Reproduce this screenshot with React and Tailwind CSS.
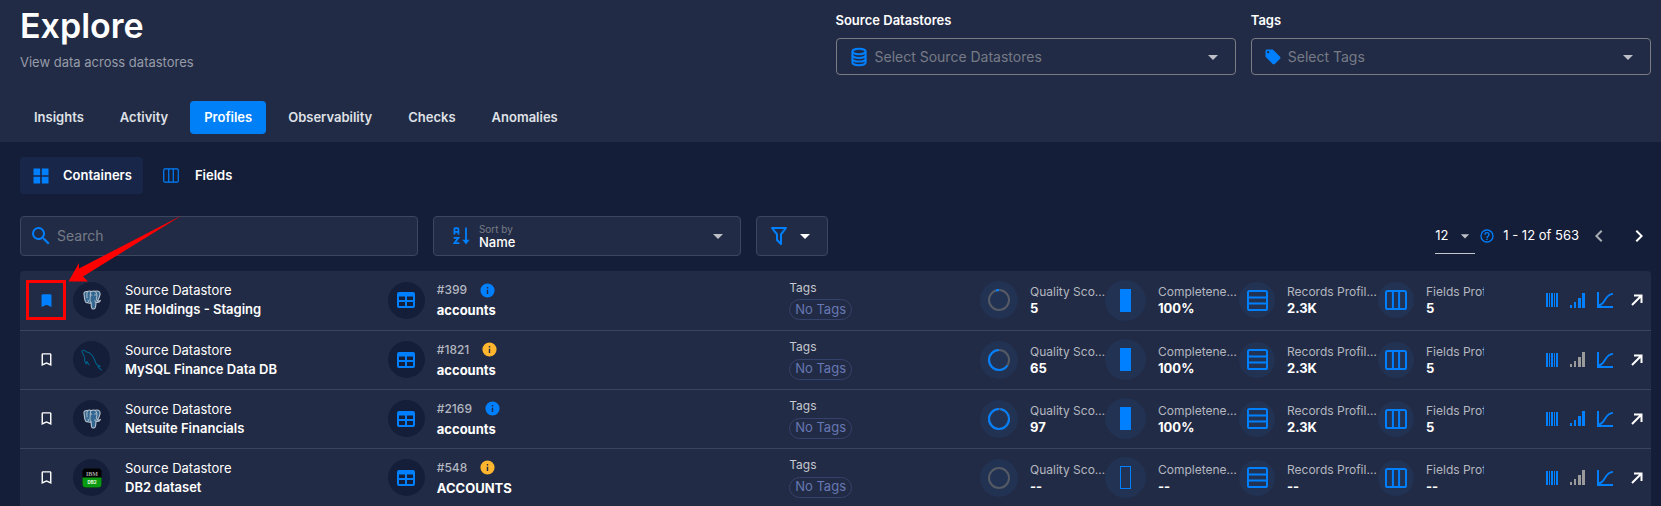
import React from "react";

function Mdi({ d, className = "size-5" }) {
  return (
    <svg viewBox="0 0 24 24" fill="currentColor" aria-hidden="true" className={"shrink-0 " + className}>
      <path d={d} />
    </svg>
  );
}

const P = {
  tag: "M5.5,7A1.5,1.5 0 0,1 4,5.5A1.5,1.5 0 0,1 5.5,4A1.5,1.5 0 0,1 7,5.5A1.5,1.5 0 0,1 5.5,7M21.41,11.58L12.41,2.58C12.05,2.22 11.55,2 11,2H4C2.89,2 2,2.89 2,4V11C2,11.55 2.22,12.05 2.59,12.41L11.58,21.41C11.95,21.77 12.45,22 13,22C13.55,22 14.05,21.77 14.41,21.41L21.41,14.41C21.78,14.05 22,13.55 22,13C22,12.44 21.77,11.94 21.41,11.58Z",
  caret: "M7,10L12,15L17,10H7Z",
  grid: "M3,11H11V3H3M3,21H11V13H3M13,21H21V13H13M13,3V11H21V3",
  search:
    "M9.5,3A6.5,6.5 0 0,1 16,9.5C16,11.11 15.41,12.59 14.44,13.73L14.71,14H15.5L20.5,19L19,20.5L14,15.5V14.71L13.73,14.44C12.59,15.41 11.11,16 9.5,16A6.5,6.5 0 0,1 3,9.5A6.5,6.5 0 0,1 9.5,3M9.5,5C7,5 5,7 5,9.5C5,12 7,14 9.5,14C12,14 14,12 14,9.5C14,7 12,5 9.5,5Z",
  filter:
    "M15,19.88C15.04,20.18 14.94,20.5 14.71,20.71C14.32,21.1 13.69,21.1 13.3,20.71L9.29,16.7C9.06,16.47 8.96,16.16 9,15.87V10.75L4.21,4.62C3.87,4.19 3.95,3.56 4.38,3.22C4.57,3.08 4.78,3 5,3V3H19V3C19.22,3 19.43,3.08 19.62,3.22C20.05,3.56 20.13,4.19 19.79,4.62L15,10.75V19.88M7.04,5L11,10.06V15.58L13,17.58V10.05L16.96,5H7.04Z",
  help: "M11,18H13V16H11V18M12,2A10,10 0 0,0 2,12A10,10 0 0,0 12,22A10,10 0 0,0 22,12A10,10 0 0,0 12,2M12,20C7.59,20 4,16.41 4,12C4,7.59 7.59,4 12,4C16.41,4 20,7.59 20,12C20,16.41 16.41,20 12,20M12,6A4,4 0 0,0 8,10H10A2,2 0 0,1 12,8A2,2 0 0,1 14,10C14,12 11,11.75 11,15H13C13,12.75 16,12.5 16,10A4,4 0 0,0 12,6Z",
  left: "M15.41,16.58L10.83,12L15.41,7.41L14,6L8,12L14,18L15.41,16.58Z",
  right: "M8.59,16.58L13.17,12L8.59,7.41L10,6L16,12L10,18L8.59,16.58Z",
  bookmark: "M17,3H7A2,2 0 0,0 5,5V21L12,18L19,21V5C19,3.89 18.1,3 17,3Z",
  bookmarkOutline: "M17,18L12,15.82L7,18V5H17M17,3H7A2,2 0 0,0 5,5V21L12,18L19,21V5C19,3.89 18.1,3 17,3Z",
  info: "M13,9H11V7H13M13,17H11V11H13M12,2A10,10 0 0,0 2,12A10,10 0 0,0 12,22A10,10 0 0,0 22,12A10,10 0 0,0 12,2Z",
};

function DatabaseIcon() {
  return (
    <svg viewBox="0 0 20 20" fill="none" stroke="currentColor" strokeWidth="2" aria-hidden="true" className="size-5 shrink-0">
      <ellipse cx="10" cy="4.5" rx="6.6" ry="2.7" />
      <path d="M3.4 4.5v11c0 1.5 3 2.7 6.6 2.7s6.6-1.2 6.6-2.7v-11" />
      <path d="M3.4 8.2c0 1.5 3 2.7 6.6 2.7s6.6-1.2 6.6-2.7M3.4 11.9c0 1.5 3 2.7 6.6 2.7s6.6-1.2 6.6-2.7" />
    </svg>
  );
}

function ColumnsIcon({ className = "h-5 w-[22px]", weight = 2 }) {
  return (
    <svg viewBox="0 0 22 20" fill="none" stroke="currentColor" strokeWidth={weight} aria-hidden="true" className={"shrink-0 " + className}>
      <rect x="1" y="1" width="20" height="18" rx="1.6" />
      <path d="M7.9 1v18M14.1 1v18" />
    </svg>
  );
}

function RowsIcon() {
  return (
    <svg viewBox="0 0 21 21" fill="none" stroke="currentColor" strokeWidth="2" aria-hidden="true" className="size-[21px] shrink-0">
      <rect x="1" y="1" width="19" height="19" rx="1.6" />
      <path d="M1 7.5h19M1 13.5h19" />
    </svg>
  );
}

function TableIcon() {
  return (
    <svg viewBox="0 0 18 16" aria-hidden="true" className="h-4 w-[18px]">
      <path
        fill="currentColor"
        fillRule="evenodd"
        d="M2 0h14a2 2 0 0 1 2 2v12a2 2 0 0 1-2 2H2a2 2 0 0 1-2-2V2a2 2 0 0 1 2-2ZM2 4.5v3.5h6V4.5ZM10 4.5v3.5h6V4.5ZM2 10v4h6v-4ZM10 10v4h6v-4Z"
      />
    </svg>
  );
}

function SortIcon() {
  return (
    <svg viewBox="0 0 18 18" fill="none" stroke="currentColor" strokeWidth="1.8" aria-hidden="true" className="size-[18px] shrink-0">
      <path d="M1.4 7.5V2.2a1 1 0 0 1 1-1h2a1 1 0 0 1 1 1v5.3M1.4 4.8h4M.6 10.9h4.8L1.4 16.2h5" />
      <path d="M13 .5v13" />
      <path d="M9.4 12.8h7.2L13 17.4Z" fill="currentColor" stroke="none" />
    </svg>
  );
}

function PostgresLogo() {
  return (
    <svg viewBox="0 0 20 20" aria-hidden="true" className="size-5">
      <path
        d="M2.2 5.2C1.3 2.6 3 1.1 5.4 1.5c1.2-.6 2.6-.5 3.8-.1 1.2-.5 2.8-.6 4-.1 3.3-.9 5.4.7 4.8 3.6-.4 2.1-1.4 4.2-2.6 6 1.2.1 2 .2 2.8-.1-.6 1.6-3 2-4.2 1.5-.2 2.2 0 4-.8 5.6-.8 1.4-3 1.5-3.6-.2-.5-1.7-.2-3.5-.6-5-1.2.7-2.6.5-3.2-.2-1.2.8-2.2-.2-2.8-1.9-.5-1.7-.6-3.6-.8-5.4Z"
        fill="#336791"
        stroke="#b9c3cf"
        strokeWidth="1.1"
      />
      <path
        d="M5.4 1.8c-.8 2-.5 4.2-.3 6.4M9 12.3c-1-.9-1.2-2-.9-3.6.3-1.7-.2-4 .7-7M5.8 12.4c.9-.5.9-1.4 0-2.6M13.3 1.5c1.6 1.8 2 4.4 1.2 6.4-.4 1.4.2 2 .8 3M8.3 5.2c.7-.4 1.5-.3 1.9.2M12.3 5.1c.6-.4 1.4-.3 1.9.1M13.6 12.3c-.9-.4-.9-1.3-.4-2"
        fill="none"
        stroke="#c4ccd6"
        strokeWidth="0.9"
      />
    </svg>
  );
}

function MysqlLogo() {
  return (
    <svg viewBox="0 0 22 22" fill="none" stroke="#00618a" strokeWidth="1.1" strokeLinejoin="round" aria-hidden="true" className="size-[22px]">
      <path d="M3.6 8.5C2.8 6.5 2 4.400 1 2.700 .7 1.500 1.800 .8 3 1.500c1.100.1 2 .8 2.900 1.500 3 .6 5.500 3 7.100 6.400 1 2.100 1.300 4.500 2.700 6.100 1 .8 2.400 1.200 3.500 2l-2.400.3c1 1.400 2.500 2 3.900 3.600" />
      <path d="M3.600 8.500c-.4 2 .1 4.500 1.500 6.500.3-1 .4-1.800.9-2.500.6 1.500 1 2.700 2.300 3.500" />
    </svg>
  );
}

function Db2Logo() {
  return (
    <svg viewBox="0 0 20 20" aria-hidden="true" className="size-5">
      <rect x="0.500" y="0.500" width="19" height="19" rx="3.500" fill="#000" />
      <path d="M.5 9.500h19V16a3.500 3.500 0 0 1-3.500 3.500H4A3.500 3.500 0 0 1 .5 16Z" fill="#0a9a12" />
      <text x="10" y="8" textAnchor="middle" fontFamily="Liberation Serif, serif" fontWeight="700" fontSize="6" fill="#a6a6a6">IBM</text>
      <text x="10" y="15.800" textAnchor="middle" fontFamily="Inter, sans-serif" fontWeight="800" fontSize="4.500" fill="#d8f5d8">DB2</text>
    </svg>
  );
}

const LOGOS = { postgres: PostgresLogo, mysql: MysqlLogo, db2: Db2Logo };

function BarcodeIcon() {
  return (
    <svg viewBox="0 0 12 14" fill="currentColor" aria-hidden="true" className="h-3.5 w-3">
      <path d="M0 0h2v14H0zM3 0h1v14H3zM5 0h2v14H5zM8 0h1v14H8zM10 0h2v14h-2z" />
    </svg>
  );
}

function SignalIcon() {
  return (
    <svg viewBox="0 0 15 15" fill="currentColor" aria-hidden="true" className="size-[15px]">
      <path d="M0 12h2v3H0zM4 9h2v6H4zM8 5h3v10H8zM12 0h3v15h-3z" />
    </svg>
  );
}

function CurveIcon() {
  return (
    <svg viewBox="0 0 16 16" fill="none" stroke="currentColor" strokeWidth="2" aria-hidden="true" className="size-4">
      <path d="M1 0v15h15" />
      <path d="M1.500 13.500C9 12.500 7 2.500 16 1.800" strokeWidth="1.800" />
    </svg>
  );
}

function ArrowUpRight() {
  return (
    <svg viewBox="0 0 12 12" fill="none" stroke="currentColor" strokeWidth="2" aria-hidden="true" className="size-3">
      <path d="M1 11 10 2M3 1.500h7.500V9" />
    </svg>
  );
}

const SCORE_RADIUS = 10;
const SCORE_LENGTH = 2 * Math.PI * SCORE_RADIUS;

function ScoreRing({ value }) {
  return (
    <svg viewBox="0 0 24 24" fill="none" strokeWidth="2" aria-hidden="true" className="size-6">
      <circle cx="12" cy="12" r={SCORE_RADIUS} stroke="#555a64" />
      {value > 0 && (
        <circle
          cx="12"
          cy="12"
          r={SCORE_RADIUS}
          stroke="#0080ff"
          strokeDasharray={`${(SCORE_LENGTH * value) / 100} ${SCORE_LENGTH}`}
          transform="translate(24 0) scale(-1 1) rotate(-90 12 12)"
        />
      )}
    </svg>
  );
}

function FilterSelect({ id, label, placeholder, icon }) {
  return (
    <div className="flex min-w-0 flex-1 flex-col gap-2">
      <label htmlFor={id} className="text-[13px] leading-5 font-semibold text-white">
        {label}
      </label>
      <div className="flex h-[37px] items-center rounded border border-[#7b7d84] pr-2.5 pl-3">
        <span className="flex text-[#0080ff]">{icon}</span>
        <select id={id} defaultValue="" className="ml-1.5 min-w-0 flex-1 appearance-none bg-transparent text-sm text-[#767b87] outline-none">
          <option value="">{placeholder}</option>
        </select>
        <Mdi d={P.caret} className="size-6 text-[#bdc0c7]" />
      </div>
    </div>
  );
}

const TABS = ["Insights", "Activity", "Profiles", "Observability", "Checks", "Anomalies"];

const ROWS = [
  { saved: true, logo: "postgres", store: "RE Holdings - Staging", id: "#399", warn: false, name: "accounts", score: 5, full: true, records: "2.3K", fields: "5", signal: true },
  { saved: false, logo: "mysql", store: "MySQL Finance Data DB", id: "#1821", warn: true, name: "accounts", score: 65, full: true, records: "2.3K", fields: "5", signal: false },
  { saved: false, logo: "postgres", store: "Netsuite Financials", id: "#2169", warn: false, name: "accounts", score: 97, full: true, records: "2.3K", fields: "5", signal: true },
  { saved: false, logo: "db2", store: "DB2 dataset", id: "#548", warn: true, name: "ACCOUNTS", score: 0, full: false, records: "--", fields: "--", signal: false },
];

function Metric({ label, value, size = "size-9", gap = "gap-3", children }) {
  return (
    <div className={"flex items-center " + gap}>
      <span className={"flex shrink-0 items-center justify-center rounded-full bg-[#223253] text-[#0080ff] " + size}>{children}</span>
      <div className="overflow-hidden whitespace-nowrap">
        <div className="text-xs leading-4 text-[#b3b7c0]">{label}</div>
        <div className="text-[13px] leading-4 font-bold text-white">{value}</div>
      </div>
    </div>
  );
}

function Row({ row, highlighted }) {
  const Logo = LOGOS[row.logo];
  return (
    <tr className="h-[59px] border-b border-[#3a445e]">
      <td className="pl-1.5">
        <div className={highlighted ? "flex size-10 items-center justify-center border-3 border-[#ff0000]" : "flex size-10 items-center justify-center"}>
          <button aria-label="Bookmark" className={row.saved ? "text-[#0080ff]" : "text-white"}>
            <Mdi d={row.saved ? P.bookmark : P.bookmarkOutline} className="size-[17px]" />
          </button>
        </div>
      </td>
      <td>
        <div className="flex items-center gap-[15px]">
          <span className="flex size-[37px] shrink-0 items-center justify-center rounded-full bg-[#151e38]">
            <Logo />
          </span>
          <div className="text-[13px] leading-[19px] whitespace-nowrap text-white">
            <div>Source Datastore</div>
            <div className="font-semibold">{row.store}</div>
          </div>
        </div>
      </td>
      <td>
        <div className="flex items-center gap-3">
          <span className="flex size-[37px] shrink-0 items-center justify-center rounded-full bg-[#151e38] text-[#0080ff]">
            <TableIcon />
          </span>
          <div>
            <div className="flex items-center gap-3">
              <span className="text-xs leading-5 font-medium text-[#b3b7c0]">{row.id}</span>
              <Mdi d={P.info} className={row.warn ? "size-[17px] text-[#ffb52e]" : "size-[17px] text-[#0080ff]"} />
            </div>
            <div className="text-[13px] leading-5 font-bold text-white">{row.name}</div>
          </div>
        </div>
      </td>
      <td>
        <div className="text-xs leading-4 text-[#c5c8cf]">Tags</div>
        <span className="inline-flex h-[21px] items-center rounded-full border border-[#35426b] px-[5px] text-[13px] text-[#6678b3]">No Tags</span>
      </td>
      <td>
        <Metric label="Quality Sco…" value={row.score || "--"} size="size-[38px]">
          <ScoreRing value={row.score} />
        </Metric>
      </td>
      <td>
        <Metric label="Completene…" value={row.full ? "100%" : "--"} size="size-[41px]">
          <span className={row.full ? "h-[23px] w-[11px] border border-[#0080ff] bg-[#0080ff]" : "h-[23px] w-[11px] border border-[#0080ff]"} />
        </Metric>
      </td>
      <td>
        <Metric label="Records Profil…" value={row.records}>
          <RowsIcon />
        </Metric>
      </td>
      <td>
        <Metric label="Fields Profi" value={row.fields}>
          <ColumnsIcon />
        </Metric>
      </td>
      <td>
        <div className="flex items-center justify-end gap-3 pr-2 text-[#0080ff]">
          <button aria-label="Fields">
            <BarcodeIcon />
          </button>
          <button aria-label="Volume" className={row.signal ? "text-[#0080ff]" : "text-[#9a9a9a]"}>
            <SignalIcon />
          </button>
          <button aria-label="Trend">
            <CurveIcon />
          </button>
          <a href="#open" aria-label="Open" className="ml-1.5 text-white">
            <ArrowUpRight />
          </a>
        </div>
      </td>
    </tr>
  );
}

export default function App() {
  return (
    <div className="min-h-screen bg-[#151e38] font-[Inter,sans-serif] text-white">
      <header className="bg-[#222b45] pr-2.5 pb-2 pl-5">
        <div className="flex items-start justify-between">
          <div className="pt-1">
            <h1 className="text-[34px] leading-11 font-semibold">Explore</h1>
            <p className="pt-1 text-[13px] leading-5 text-[#969ba8]">View data across datastores</p>
          </div>
          <div className="flex w-1/2 gap-[15px] pt-2.5">
            <FilterSelect id="stores" label="Source Datastores" placeholder="Select Source Datastores" icon={<DatabaseIcon />} />
            <FilterSelect id="tags" label="Tags" placeholder="Select Tags" icon={<Mdi d={P.tag} className="size-[18px]" />} />
          </div>
        </div>
        <nav className="mt-[26px] flex gap-2">
          {TABS.map((tab) => (
            <button
              key={tab}
              className={
                tab === "Profiles"
                  ? "h-[33px] rounded bg-[#0080f6] px-3.5 text-[13px] font-semibold text-white"
                  : "h-[33px] rounded px-3.5 text-[13px] font-semibold text-[#dfe1e6]"
              }
            >
              {tab}
            </button>
          ))}
        </nav>
      </header>

      <main className="pt-[15px] pr-2.5 pl-5">
        <div className="flex gap-2">
          <button className="flex h-[37px] items-center gap-3 rounded bg-[#182649] px-[11px] text-[13px] font-semibold">
            <Mdi d={P.grid} className="size-5 text-[#0080ff]" />
            Containers
          </button>
          <button className="flex h-[37px] items-center gap-4 rounded px-3 text-[13px] font-semibold">
            <span className="text-[#0080ff]">
              <ColumnsIcon className="h-[15px] w-4" weight={1.600} />
            </span>
            Fields
          </button>
        </div>

        <div className="mt-[22px] flex items-center gap-[15px]">
          <label className="flex h-10 w-[24.400%] items-center rounded border border-[#3c465f] bg-[#222b45] px-2">
            <Mdi d={P.search} className="size-6 text-[#0080ff]" />
            <span className="sr-only">Search</span>
            <input type="text" placeholder="Search" className="ml-1 min-w-0 flex-1 bg-transparent text-sm outline-none placeholder:text-[#767b87]" />
          </label>
          <div className="flex h-10 w-[18.900%] items-center rounded border border-[#3c465f] bg-[#222b45] pr-2.5 pl-[19px]">
            <span className="text-[#0080ff]">
              <SortIcon />
            </span>
            <div className="ml-2 flex min-w-0 flex-1 flex-col">
              <label htmlFor="sort" className="text-[10px] leading-3 text-[#767b87]">
                Sort by
              </label>
              <select id="sort" defaultValue="name" className="h-[15px] appearance-none bg-transparent text-[13px] leading-[15px] font-medium text-white outline-none">
                <option value="name">Name</option>
              </select>
            </div>
            <Mdi d={P.caret} className="size-6 text-[#bdc0c7]" />
          </div>
          <button aria-label="Filter" className="flex h-10 items-center gap-0.5 rounded border border-[#3c465f] bg-[#222b45] px-2.5">
            <Mdi d={P.filter} className="size-6 text-[#0080ff]" />
            <Mdi d={P.caret} className="size-6" />
          </button>
          <div className="ml-auto flex items-center">
            <div className="flex h-9 items-center border-b border-[#c3c6cd]">
              <select aria-label="Rows per page" defaultValue="12" className="w-5 appearance-none bg-transparent text-[13px] text-white outline-none">
                <option value="12">12</option>
              </select>
              <Mdi d={P.caret} className="size-5 text-[#bdc0c7]" />
            </div>
            <Mdi d={P.help} className="ml-1 size-4 text-[#0080ff]" />
            <span className="ml-2 text-[13px]">1 - 12 of 563</span>
            <button aria-label="Previous page" className="ml-2 text-[#a9adb6]">
              <Mdi d={P.left} className="size-6" />
            </button>
            <button aria-label="Next page" className="ml-4">
              <Mdi d={P.right} className="size-6" />
            </button>
          </div>
        </div>

        <div className="relative mt-[15px]">
          <table className="w-full table-fixed rounded-t bg-[#222b45]">
            <colgroup>
              <col className="w-[53px]" />
              <col className="w-[19.300%]" />
              <col />
              <col className="w-[11.700%]" />
              <col className="w-[125px]" />
              <col className="w-[134px]" />
              <col className="w-[139px]" />
              <col className="w-[106px]" />
              <col className="w-[167px]" />
            </colgroup>
            <tbody>
              {ROWS.map((row, i) => (
                <Row key={row.id} row={row} highlighted={i === 0} />
              ))}
            </tbody>
          </table>
          <svg viewBox="0 0 120 70" aria-hidden="true" className="pointer-events-none absolute -top-14 left-12 h-[70px] w-[120px]">
            <path d="M0.500 66.500 11 48v5.500L114.500 0 15 61.500l5 5Z" fill="#ff0000" />
          </svg>
        </div>
      </main>
    </div>
  );
}
